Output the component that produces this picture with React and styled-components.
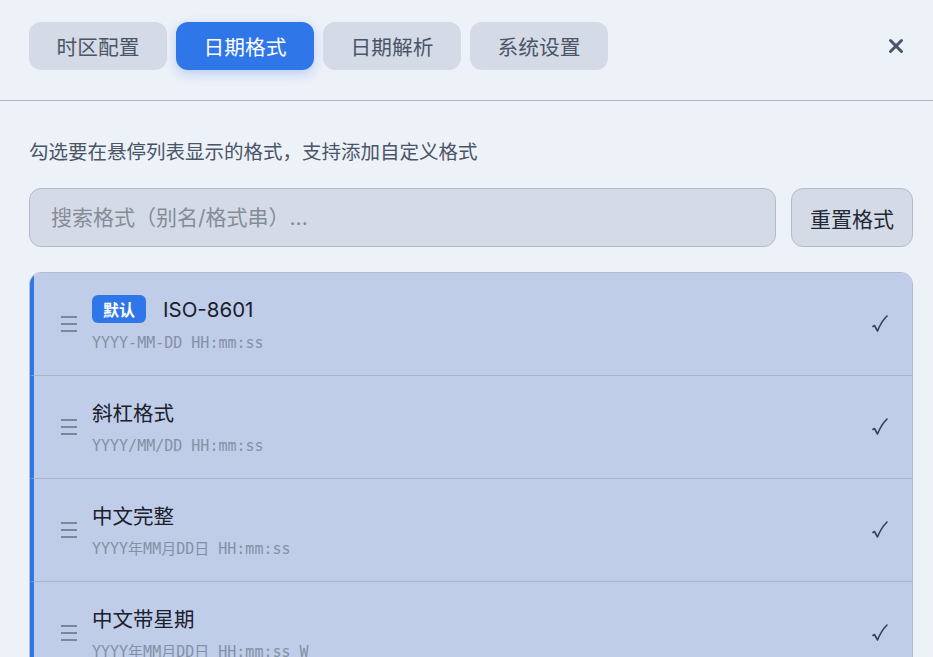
import React, { useState } from 'react';
import styled, { createGlobalStyle } from 'styled-components';

const GlobalStyle = createGlobalStyle`
  html, body {
    margin: 0;
    padding: 0;
    background: #edf1f8;
    overflow: hidden;
  }
  body {
    font-family: Inter, "Noto Sans CJK SC", sans-serif;
    color: #1f2937;
  }
  * { box-sizing: border-box; }
`;

const Panel = styled.div`
  width: 933px;
  height: 657px;
  overflow: hidden;
  background: #edf1f8;
`;

const Header = styled.div`
  display: flex;
  align-items: center;
  padding: 22px 28px 30px 29px;
  border-bottom: 1px solid #aeb7ca;
`;

const Tabs = styled.div`
  display: flex;
  gap: 9px;
  flex: 1;
`;

const Tab = styled.button`
  height: 48px;
  width: 138px;
  padding: 0;
  border: none;
  border-radius: 12px;
  font-family: inherit;
  font-size: 20.7px;
  cursor: pointer;
  background: ${({ active }) => (active ? '#2f76e8' : '#d5dbe6')};
  color: ${({ active }) => (active ? '#ffffff' : '#4a5568')};
  box-shadow: ${({ active }) => (active ? '0 4px 12px rgba(47, 118, 232, 0.28)' : 'none')};
`;

const CloseButton = styled.button`
  border: none;
  background: transparent;
  padding: 0;
  width: 18px;
  height: 18px;
  display: flex;
  align-items: center;
  justify-content: center;
  cursor: pointer;
`;

const Content = styled.div`
  padding: 40px 20px 0 29px;
`;

const Hint = styled.p`
  margin: 0;
  font-size: 19.5px;
  line-height: 22px;
  color: #4a5568;
`;

const SearchRow = styled.div`
  display: flex;
  gap: 15px;
  margin-top: 25px;
`;

const SearchInput = styled.input`
  flex: 1;
  height: 59px;
  padding: 0 21px;
  border: 1px solid #b3bccd;
  border-radius: 12px;
  background: #d5dbe6;
  font-family: inherit;
  font-size: 21px;
  color: #1f2937;
  outline: none;
  &::placeholder {
    color: #858c99;
  }
`;

const ResetButton = styled.button`
  width: 122px;
  height: 59px;
  padding: 0;
  border: 1px solid #b3bccd;
  border-radius: 12px;
  background: #d5dbe6;
  font-family: inherit;
  font-size: 21px;
  color: #1f2937;
  cursor: pointer;
`;

const List = styled.div`
  margin-top: 25px;
  border: 1px solid #b3bccd;
  border-radius: 12px;
  overflow: hidden;
`;

const Item = styled.div`
  display: flex;
  align-items: center;
  height: 103px;
  padding: 0 24px 0 26px;
  background: ${({ checked }) => (checked ? '#bfcde8' : '#d5dbe6')};
  border-left: 4px solid ${({ checked }) => (checked ? '#2f76e8' : 'transparent')};
  border-bottom: 1px solid #a9b4c9;
`;

const Handle = styled.div`
  width: 18px;
  display: flex;
  margin-right: 14px;
  cursor: grab;
`;

const Info = styled.div`
  flex: 1;
  display: flex;
  flex-direction: column;
  gap: 10px;
`;

const TitleRow = styled.div`
  display: flex;
  align-items: center;
  gap: 17px;
  height: 28px;
`;

const Badge = styled.span`
  height: 28px;
  padding: 0 11px;
  border-radius: 6px;
  background: #2f76e8;
  color: #ffffff;
  font-size: 16px;
  font-weight: 700;
  display: flex;
  align-items: center;
`;

const Title = styled.span`
  font-size: 20.5px;
  color: #1a202c;
`;

const Pattern = styled.span`
  font-family: "DejaVu Sans Mono", "Noto Sans CJK SC", monospace;
  font-size: 15px;
  line-height: 20px;
  color: #8590a6;
`;

const Check = styled.span`
  display: flex;
`;

const formats = [
  { id: 'iso', name: 'ISO-8601', pattern: 'YYYY-MM-DD HH:mm:ss', isDefault: true },
  { id: 'slash', name: '斜杠格式', pattern: 'YYYY/MM/DD HH:mm:ss' },
  { id: 'cn', name: '中文完整', pattern: 'YYYY年MM月DD日 HH:mm:ss' },
  { id: 'cnw', name: '中文带星期', pattern: 'YYYY年MM月DD日 HH:mm:ss W' },
];

const tabs = ['时区配置', '日期格式', '日期解析', '系统设置'];

const MenuIcon = () => (
  <svg width="18" height="18" viewBox="0 0 18 18">
    <g stroke="#7d879c" strokeWidth="2">
      <line x1="1" y1="2" x2="17" y2="2" />
      <line x1="1" y1="9" x2="17" y2="9" />
      <line x1="1" y1="16" x2="17" y2="16" />
    </g>
  </svg>
);

const CloseIcon = () => (
  <svg width="16" height="16" viewBox="0 0 16 16">
    <g stroke="#4a5568" strokeWidth="3" strokeLinecap="round">
      <line x1="2.5" y1="2.5" x2="13.5" y2="13.5" />
      <line x1="13.5" y1="2.5" x2="2.5" y2="13.5" />
    </g>
  </svg>
);

const CheckIcon = () => (
  <svg width="16" height="19" viewBox="0 0 16 19">
    <path
      d="M1 11.5 L2.5 10.5 L5.5 16 Q9 7 15 1"
      fill="none"
      stroke="#36405a"
      strokeWidth="1.6"
      strokeLinejoin="round"
      strokeLinecap="round"
    />
  </svg>
);

export default function App() {
  const [active, setActive] = useState(1);

  return (
    <>
      <GlobalStyle />
      <Panel>
        <Header>
          <Tabs>
            {tabs.map((t, i) => (
              <Tab key={t} active={i === active} onClick={() => setActive(i)}>
                {t}
              </Tab>
            ))}
          </Tabs>
          <CloseButton aria-label="关闭">
            <CloseIcon />
          </CloseButton>
        </Header>
        <Content>
          <Hint>勾选要在悬停列表显示的格式，支持添加自定义格式</Hint>
          <SearchRow>
            <SearchInput placeholder="搜索格式（别名/格式串）..." />
            <ResetButton>重置格式</ResetButton>
          </SearchRow>
          <List>
            {formats.map((f) => (
              <Item key={f.id} checked>
                <Handle>
                  <MenuIcon />
                </Handle>
                <Info>
                  <TitleRow>
                    {f.isDefault && <Badge>默认</Badge>}
                    <Title>{f.name}</Title>
                  </TitleRow>
                  <Pattern>{f.pattern}</Pattern>
                </Info>
                <Check>
                  <CheckIcon />
                </Check>
              </Item>
            ))}
          </List>
        </Content>
      </Panel>
    </>
  );
}
